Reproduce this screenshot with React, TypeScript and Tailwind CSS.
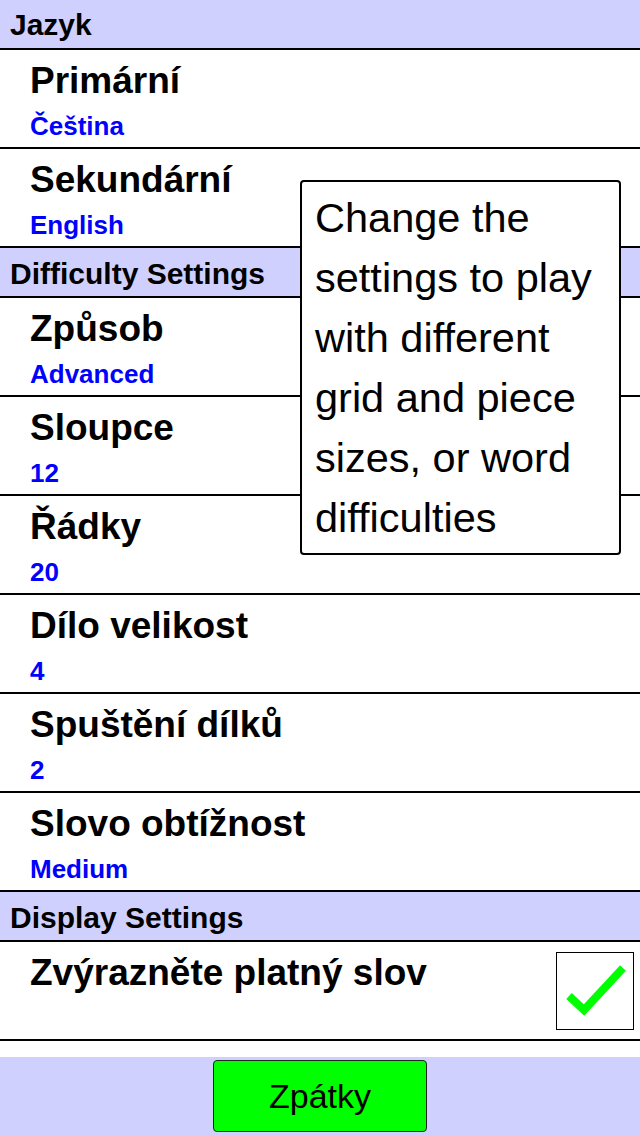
import React from "react";

function Header({ text, h, pt }: { text: string; h: string; pt: string }) {
  return (
    <div className={`${h} ${pt} shrink-0 border-b-2 border-black bg-[#d0d0ff] pl-[10px] text-[30px] font-bold leading-[34px] text-black`}>
      {text}
    </div>
  );
}

function Row({ title, value }: { title: string; value: string }) {
  return (
    <div className="h-[99px] shrink-0 border-b-2 border-black pl-[30px] pt-[10px] flex flex-col gap-[9px]">
      <div className="text-[37px] font-bold leading-[42px] text-black">{title}</div>
      <div className="text-[26px] font-bold leading-[30px] text-[#0000ff]">{value}</div>
    </div>
  );
}

export default function App() {
  return (
    <div className="relative w-[640px] h-[1136px] bg-white flex flex-col overflow-hidden [font-family:'Liberation_Sans',Arial,sans-serif]">
      <Header text="Jazyk" h="h-[50px]" pt="pt-[8px]" />
      <Row title="Primární" value="Čeština" />
      <Row title="Sekundární" value="English" />
      <Header text="Difficulty Settings" h="h-[50px]" pt="pt-[9px]" />
      <Row title="Způsob" value="Advanced" />
      <Row title="Sloupce" value="12" />
      <Row title="Řádky" value="20" />
      <Row title="Dílo velikost" value="4" />
      <Row title="Spuštění dílků" value="2" />
      <Row title="Slovo obtížnost" value="Medium" />
      <Header text="Display Settings" h="h-[50px]" pt="pt-[9px]" />
      <div className="h-[99px] shrink-0 border-b-2 border-black pl-[30px] pt-[10px] pr-[6px] flex flex-row justify-between">
        <div className="text-[37px] font-bold leading-[42px] text-black">Zvýrazněte platný slov</div>
        <div className="w-[78px] h-[78px] border border-black bg-white">
          <svg width="76" height="76" viewBox="0 0 76 76">
            <polyline points="12,43 27,57 66,15" fill="none" stroke="#00ff00" strokeWidth="8" strokeLinejoin="miter" strokeLinecap="butt" />
          </svg>
        </div>
      </div>
      <div className="h-[16px] shrink-0 bg-white" />
      <div className="flex-1 bg-[#d0d0ff] flex justify-center pt-[3px]">
        <button className="w-[214px] h-[72px] bg-[#00ff00] border border-[#222222] rounded-[4px] flex items-center justify-center text-[34px] text-black leading-none [font-family:'Liberation_Sans',Arial,sans-serif]">
          Zpátky
        </button>
      </div>
      <div className="absolute left-[300px] top-[180px] w-[321px] h-[375px] bg-white border-2 border-black rounded-[4px] pl-[13px] pr-[9px] pt-[6px] text-[41.5px] leading-[60px] text-black">
        Change the settings to play with different grid and piece sizes, or word difficulties
      </div>
    </div>
  );
}
